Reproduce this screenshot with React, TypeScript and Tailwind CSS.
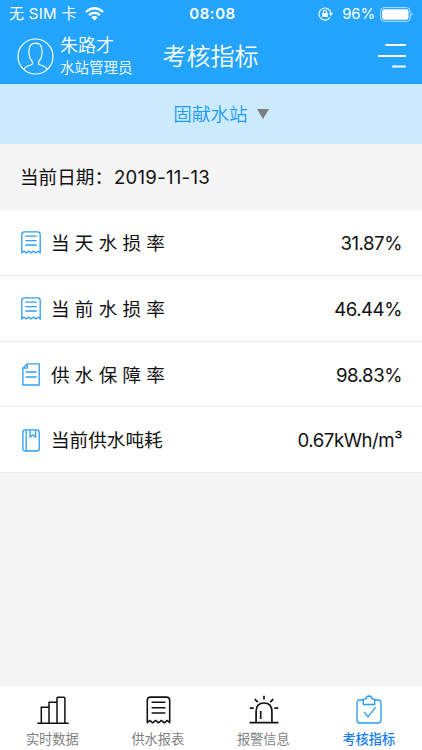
import React from 'react';

type IconProps = { className?: string };

const ReceiptIcon = ({ className, sw = 1.3 }: IconProps & { sw?: number }) => (
  <svg className={className} viewBox="0 0 20 23" fill="none" stroke="currentColor" strokeWidth={sw} strokeLinejoin="round">
    <path d="M0.8 22V3.6Q0.8 0.9 3.5 0.9H16.5Q19.2 0.9 19.2 3.6V22L17.2 20.1L14.8 22L12.4 20.1L10 22L7.6 20.1L5.2 22L2.8 20.1Z" />
    <path d="M4.8 5.2H15.2M4.8 9.6H15.2M4.8 14H15.2" strokeLinecap="round" />
  </svg>
);

const PageIcon = ({ className }: IconProps) => (
  <svg className={className} viewBox="0 0 20 23" fill="none" stroke="currentColor" strokeWidth="1.3" strokeLinejoin="round">
    <path d="M6.2 0.9H18.2V22H1.9V5.2ZM6.2 0.9V5.2H1.9" />
    <path d="M5.2 9H15.2M5.2 14H15.2" strokeLinecap="round" />
  </svg>
);

const BookIcon = ({ className }: IconProps) => (
  <svg className={className} viewBox="0 0 20 23" fill="none" stroke="currentColor" strokeWidth="1.3" strokeLinejoin="round">
    <rect x="1.9" y="0.9" width="16.3" height="21.1" rx="2" />
    <path d="M5.2 0.9V22M9 0.9V8.3L11.8 5.8L14.6 8.3V0.9" />
  </svg>
);

const BarsIcon = ({ className }: IconProps) => (
  <svg className={className} viewBox="0 0 32 28" fill="none" stroke="currentColor" strokeWidth="1.5" strokeLinejoin="round" strokeLinecap="round">
    <path d="M0.8 27.2H31.2M4.3 27V11.3H12M12 27V6.3H20M20 27V2Q20 1.2 20.8 1.2H27Q27.9 1.2 27.9 2V27" />
  </svg>
);

const AlarmIcon = ({ className }: IconProps) => (
  <svg className={className} viewBox="0 0 30 29" fill="none" stroke="currentColor" strokeWidth="1.7" strokeLinecap="butt">
    <path d="M0.5 27.6H29.5M7.1 27.5V16.5Q7.1 8 15 8Q22.9 8 22.9 16.5V27.5M11.7 16V24M15 0.8V4.5M5.7 4.1L8.9 7.2M24.3 4.1L21.1 7.2M0.8 13.1H4.6M25.4 13.1H29.2" />
  </svg>
);

const ClipboardIcon = ({ className }: IconProps) => (
  <svg className={className} viewBox="0 0 26 29" fill="none" stroke="currentColor" strokeWidth="1.3" strokeLinejoin="round" strokeLinecap="round">
    <path d="M7.3 5H4Q1 5 1 8V25Q1 28 4 28H22Q25 28 25 25V8Q25 5 22 5H18.7" />
    <path d="M7.3 9.5V4.2H9.7Q10.3 1 13 1Q15.7 1 16.3 4.2H18.7V9.5ZM8.3 17.2L12 21.8L19.3 12.7" />
  </svg>
);

const rows = [
  { label: '当 天 水 损 率', value: '31.87%', Icon: ReceiptIcon },
  { label: '当 前 水 损 率', value: '46.44%', Icon: ReceiptIcon },
  { label: '供 水 保 障 率', value: '98.83%', Icon: PageIcon },
  { label: '当前供水吨耗', value: '0.67kWh/m³', Icon: BookIcon },
];

const StatusBar = () => (
  <div className="grid h-7 grid-cols-[1fr_auto_1fr] items-center pl-[11px] pr-2 text-[15px] leading-7">
    <div className="-ml-0.5 flex items-center">
      <span className="whitespace-nowrap tracking-[0.3px]">无 SIM 卡</span>
      <svg className="ml-2 h-[14px] w-[19px]" viewBox="0 0 19 14" fill="none" stroke="white" strokeWidth="2.3">
        <path d="M1 5Q9.5 -2.6 18 5M4 8.2Q9.5 3.4 15 8.2" />
        <path d="M6.3 10.3Q9.5 7.5 12.7 10.3L9.5 13.5Z" fill="white" stroke="none" />
      </svg>
    </div>
    <span className="text-[15px] font-semibold tracking-[0.5px]">08:08</span>
    <div className="flex items-center justify-end">
      <svg className="mr-[9px] h-[14px] w-[15px]" viewBox="0 0 15 14" fill="none" stroke="white" strokeWidth="1.1">
        <path d="M12.1 10.3A6 6 0 1 1 13 6.5" />
        <path d="M10.8 6.3H15L12.9 9Z" fill="white" stroke="none" />
        <rect x="4.2" y="6" width="5.6" height="4.1" rx="0.5" fill="white" stroke="none" />
        <path d="M5.3 6V4.9Q5.3 3.2 7 3.2Q8.7 3.2 8.7 4.9V6" />
      </svg>
      <span className="mr-[5px] tracking-[-0.2px]">96%</span>
      <svg className="h-[15px] w-[34px]" viewBox="0 0 34 15" fill="none">
        <rect x="0.6" y="0.6" width="29.5" height="13.8" rx="3.5" stroke="white" strokeOpacity="0.65" />
        <rect x="2.2" y="2.2" width="26.3" height="10.6" rx="2" fill="white" />
        <path d="M31.5 5.3Q33.6 7.5 31.5 9.7Z" fill="white" fillOpacity="0.7" />
      </svg>
    </div>
  </div>
);

export default function App() {
  return (
    <div className="flex h-[750px] w-[422px] flex-col overflow-hidden bg-[#f5f5f5] font-['Inter','Noto_Sans_CJK_SC',sans-serif] text-[#111]">
      <header className="h-[84px] shrink-0 bg-[#22a4ff] text-white">
        <StatusBar />
        <div className="grid h-14 grid-cols-[1fr_auto_1fr] items-center pl-[17px] pr-4">
          <div className="flex items-center gap-[6px]">
            <svg className="h-[37px] w-[37px]" viewBox="0 0 37 37" fill="none" stroke="white" strokeWidth="1.2">
              <circle cx="18.5" cy="18.5" r="17.5" />
              <path d="M6.7 31.4Q8.3 28.4 13.7 27Q16.4 26.2 15.2 23.4Q11.6 19.4 11.9 13.2Q12 5.2 18.5 5.2Q25 5.2 25.1 13.2Q25.4 19.4 21.8 23.4Q20.6 26.2 23.3 27Q28.7 28.4 30.3 31.4" />
            </svg>
            <div className="flex flex-col whitespace-nowrap font-[350]">
              <span className="text-[18px] leading-6">朱路才</span>
              <span className="text-[14.5px] leading-5">水站管理员</span>
            </div>
          </div>
          <h1 className="pr-[2px] pt-px text-[24px] font-[350] leading-8">考核指标</h1>
          <svg className="h-[26px] w-7 justify-self-end" viewBox="0 0 28 26" fill="none" stroke="white" strokeWidth="2" strokeLinecap="round">
            <path d="M8 2H27M1 13H27M15 23.6H27" />
          </svg>
        </div>
      </header>

      <div className="flex h-[60px] shrink-0 items-center justify-center gap-[9px] bg-[#cdebff] pl-5 pt-[2px] text-[18.6px] font-[350] text-[#1c9bfa]">
        <span>固献水站</span>
        <svg className="-mt-[2px] h-[10px] w-3" viewBox="0 0 12 10"><path d="M0 0H12L6 10Z" fill="#7b7f82" /></svg>
      </div>

      <div className="flex h-[66px] shrink-0 items-center pl-5 pt-[2px] text-[18.6px]">
        <span>当前日期：</span>
        <span className="ml-px tracking-[0.25px]">2019-11-13</span>
      </div>

      <main>
        {rows.map(({ label, value, Icon }) => (
          <div key={label} className="flex h-[65.8px] items-center border-b-[1.5px] border-[#ebebeb] bg-white pl-[21px] pr-5 pt-px text-[18.6px]">
            <Icon className="mr-[10px] h-[23px] w-5 text-[#2b9df4]" />
            <span className="flex-1 whitespace-pre pt-[2px]">{label}</span>
            <span className="pt-[2px] tracking-[-0.45px]">{value}</span>
          </div>
        ))}
      </main>

      <nav className="mt-auto grid h-[65px] shrink-0 grid-cols-4 border-t border-[#eee] bg-white text-[13.2px] text-[#808080]">
        <div className="flex flex-col items-center pt-[10px]">
          <BarsIcon className="h-7 w-8 text-[#111]" />
          <span className="mt-[5px] pr-px leading-5">实时数据</span>
        </div>
        <div className="flex flex-col items-center pt-[10px]">
          <ReceiptIcon className="h-7 w-[25px] text-[#111]" />
          <span className="mt-[5px] pr-px leading-5">供水报表</span>
        </div>
        <div className="flex flex-col items-center pt-[9px]">
          <AlarmIcon className="h-[29px] w-[30px] text-[#111]" />
          <span className="mt-[5px] pr-px leading-5">报警信息</span>
        </div>
        <div className="flex flex-col items-center pt-[9px] text-[#187df5]">
          <ClipboardIcon className="h-[29px] w-[26px] text-[#259bfa]" />
          <span className="mt-[5px] pr-px font-medium leading-5">考核指标</span>
        </div>
      </nav>
    </div>
  );
}
